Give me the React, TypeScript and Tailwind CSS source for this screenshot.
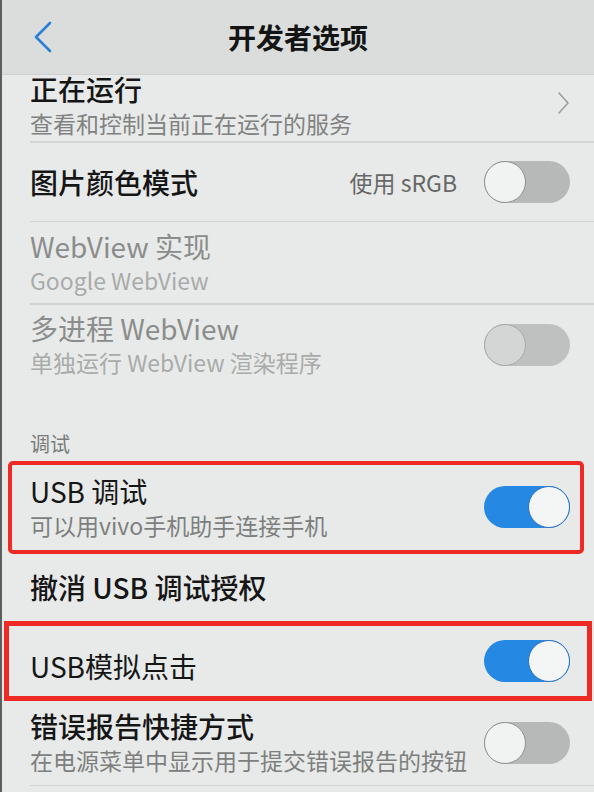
import React from "react";

const font = { fontFamily: '"Noto Sans CJK SC", "Noto Sans", sans-serif' };

function Toggle({ state }: { state: "on" | "off" | "disabled" }) {
  if (state === "on") {
    return (
      <div className="flex h-[42px] w-[86px] shrink-0 justify-end rounded-full bg-[#2588e2]">
        <div className="h-[42px] w-[42px] rounded-full border-[1.5px] border-[#2f74bf] bg-[#f4f5f5]" />
      </div>
    );
  }
  if (state === "disabled") {
    return (
      <div className="flex h-[42px] w-[86px] shrink-0 rounded-full bg-[#bfc1c0]">
        <div className="h-[42px] w-[42px] rounded-full border-[1.5px] border-[#a7a9a8] bg-[#d4d6d5]" />
      </div>
    );
  }
  return (
    <div className="flex h-[42px] w-[86px] shrink-0 rounded-full bg-[#b7b9b8]">
      <div className="h-[42px] w-[42px] rounded-full border-[1.5px] border-[#8f9190] bg-[#f1f2f2]" />
    </div>
  );
}

function Divider() {
  return <div className="ml-[28px] h-[1.5px] bg-[#d3d5d4]" />;
}

export default function App() {
  return (
    <div
      className="flex h-[792px] w-[594px] flex-col overflow-hidden border-l-2 border-[#5d5f5e] bg-[#e8eae9]"
      style={font}
    >
      {/* Header */}
      <div className="grid h-[75px] shrink-0 grid-cols-[1fr_auto_1fr] items-center border-b-[1.5px] border-[#cfd1d0] bg-[#dbdddc]">
        <div className="flex items-center pl-[31px]">
          <svg width="20" height="32" viewBox="0 0 20 32" fill="none">
            <path d="M17 2 L3 16 L17 30" stroke="#2a7fd6" strokeWidth="2.6" strokeLinecap="round" strokeLinejoin="round" />
          </svg>
        </div>
        <div className="text-[28px] font-semibold leading-none text-[#141414]">开发者选项</div>
        <div />
      </div>

      {/* 正在运行 */}
      <div className="flex h-[66px] shrink-0 items-start pl-[28px] pr-[24px]">
        <div className="flex flex-1 flex-col">
          <div className="text-[28px] leading-[28px] font-medium text-[#161616]">正在运行</div>
          <div className="mt-[4px] text-[23px] leading-[32px] text-[#808281]">查看和控制当前正在运行的服务</div>
        </div>
        <div className="mt-[16px] flex items-center">
          <svg width="14" height="24" viewBox="0 0 14 24" fill="none">
            <path d="M3 2 L12 12 L3 22" stroke="#9c9e9d" strokeWidth="1.6" strokeLinecap="round" strokeLinejoin="round" />
          </svg>
        </div>
      </div>
      <Divider />

      {/* 图片颜色模式 */}
      <div className="flex h-[78px] shrink-0 items-center pl-[28px] pr-[24px]">
        <div className="flex-1 text-[28px] font-medium leading-[34px] text-[#161616]">图片颜色模式</div>
        <div className="mr-[27px] text-[23px] leading-[30px] text-[#666867]">使用 sRGB</div>
        <Toggle state="off" />
      </div>
      <Divider />

      {/* WebView 实现 */}
      <div className="flex h-[81px] shrink-0 items-center pl-[28px] pr-[24px]">
        <div className="flex flex-col">
          <div className="text-[28px] leading-[34px] text-[#8b8d8c]">WebView 实现</div>
          <div className="mt-[1px] text-[23px] leading-[32px] text-[#a9abaa]">Google WebView</div>
        </div>
      </div>
      <Divider />

      {/* 多进程 WebView */}
      <div className="flex h-[80px] shrink-0 items-center pl-[28px] pr-[24px]">
        <div className="flex flex-1 flex-col">
          <div className="text-[28px] leading-[34px] text-[#8b8d8c]">多进程 WebView</div>
          <div className="mt-[1px] text-[23px] leading-[32px] text-[#a9abaa]">单独运行 WebView 渲染程序</div>
        </div>
        <Toggle state="disabled" />
      </div>

      {/* Section header */}
      <div className="flex h-[76px] shrink-0 items-end pb-[4px] pl-[28px]">
        <div className="text-[20px] leading-[26px] text-[#7a7c7b]">调试</div>
      </div>

      {/* USB 调试 */}
      <div className="mx-[6px] mr-[10px] flex h-[93px] shrink-0 items-center rounded-[5px] border-4 border-[#ee2a24] pl-[18px] pr-[10px]">
        <div className="flex flex-1 flex-col">
          <div className="text-[28px] leading-[34px] text-[#161616]">USB 调试</div>
          <div className="mt-[1px] text-[23px] leading-[32px] text-[#7d7f7e]">可以用vivo手机助手连接手机</div>
        </div>
        <Toggle state="on" />
      </div>

      {/* 撤消 USB 调试授权 */}
      <div className="flex h-[67px] shrink-0 items-center pl-[28px] pr-[24px]">
        <div className="text-[28px] font-medium leading-[34px] text-[#161616]">撤消 USB 调试授权</div>
      </div>

      {/* USB模拟点击 */}
      <div className="ml-[2px] mr-[2px] flex h-[80px] shrink-0 items-center border-[5px] border-[#ee2a24] pl-[21px] pr-[17px]">
        <div className="flex-1 pt-[10px] text-[28px] leading-[34px] text-[#161616]">USB模拟点击</div>
        <Toggle state="on" />
      </div>

      {/* 错误报告快捷方式 */}
      <div className="flex h-[84px] shrink-0 items-center pl-[28px] pr-[24px]">
        <div className="flex flex-1 flex-col">
          <div className="text-[28px] font-medium leading-[34px] text-[#161616]">错误报告快捷方式</div>
          <div className="mt-[1px] text-[23px] leading-[32px] text-[#7d7f7e]">在电源菜单中显示用于提交错误报告的按钮</div>
        </div>
        <Toggle state="off" />
      </div>
      <Divider />
    </div>
  );
}
